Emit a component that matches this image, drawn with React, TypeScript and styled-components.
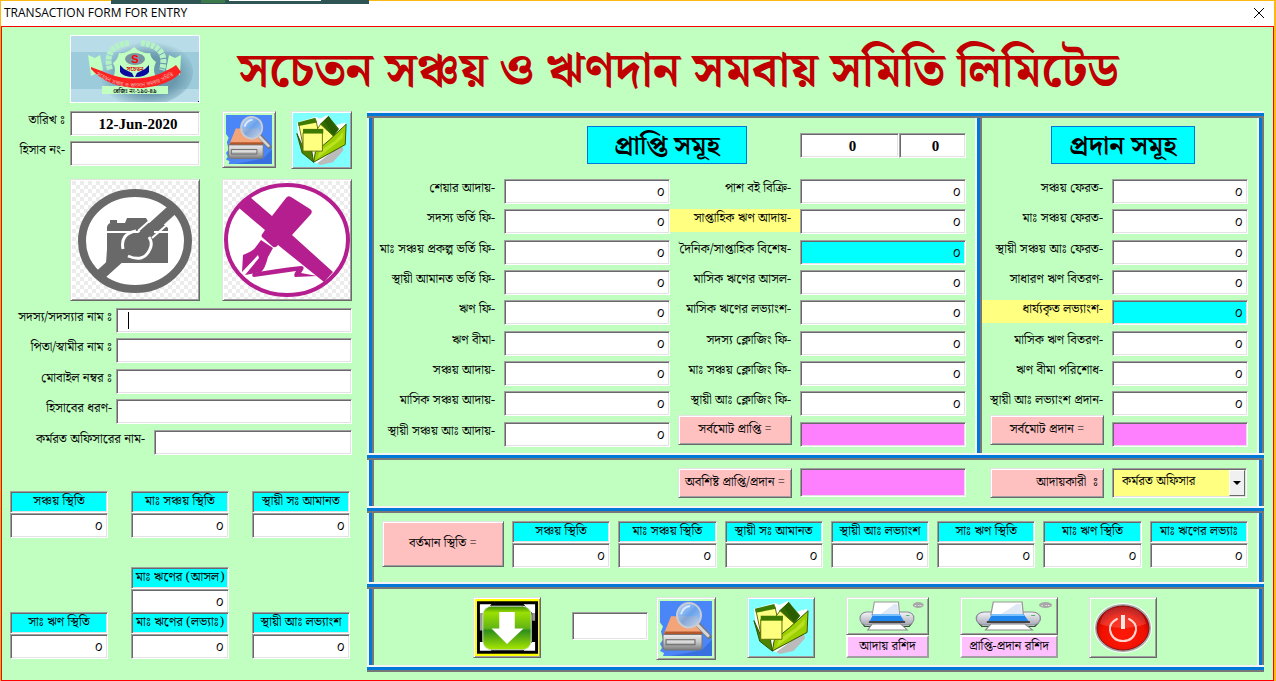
import React, { useId, useState } from "react";
import styled, { createGlobalStyle, css } from "styled-components";

const bengali = `"Noto Serif Bengali", "Lohit Bengali", "Liberation Serif", serif`;

const GlobalStyle = createGlobalStyle`
  * { box-sizing: border-box; }
  body { margin: 0; background: #fdb913; color: #000; font-family: ${bengali}; font-size: 13px; line-height: 20px; }
  input, select, button { font: inherit; color: inherit; margin: 0; }
`;

const sunken = css`
  border: 1px solid;
  border-color: #a0a0a0 #fff #fff #a0a0a0;
  box-shadow: inset 1px 1px #696969, inset -1px -1px #e3e3e3;
`;

const raised = css`
  border: 1px solid;
  border-color: #e3e3e3 #696969 #696969 #e3e3e3;
  box-shadow: inset 1px 1px #fff, inset -1px -1px #a0a0a0;
`;

/* ---------- window ---------- */

const Window = styled.div`
  position: relative;
  display: flex;
  flex-direction: column;
  min-width: 1240px;
  min-height: 100vh;
  padding: 1px 2px 0 1px;
`;

const BackdropStrip = styled.div`
  position: absolute;
  top: 0;
  left: 111px;
  width: 258px;
  height: 4px;
  padding-left: 90px;
  display: flex;
  gap: 4px;
  background: #2f5454;
`;

const BackdropChip = styled.i<{ $wide?: boolean }>`
  width: ${(p) => (p.$wide ? 92 : 24)}px;
  height: ${(p) => (p.$wide ? 1 : 3)}px;
  background: ${(p) => (p.$wide ? "#fff" : "#3c7a4c")};
`;

const TitleBar = styled.header`
  display: flex;
  align-items: center;
  justify-content: space-between;
  height: 25px;
  padding: 0 9px 1px 3px;
  background: #fff;
  font: 12px/20px "Open Sans", "Noto Sans", sans-serif;
`;

const CloseButton = styled.button`
  display: flex;
  padding: 0;
  border: 0;
  background: none;
`;

const Form = styled.main`
  flex: 1;
  padding-bottom: 8px;
  border: 1px solid #f00;
  background: #c0ffc0;
`;

const Masthead = styled.div`
  display: flex;
  height: 84px;
  padding: 8px 0 0 68px;
`;

const LogoFrame = styled.div`
  width: 130px;
  height: 68px;
  border: 1px solid #fff;
  svg { display: block; }
`;

const Heading = styled.h1`
  margin: 0 0 0 38px;
  color: #c00000;
  font-size: 48px;
  font-weight: 700;
  line-height: 74px;
  white-space: nowrap;
`;

const Columns = styled.div`
  display: flex;
`;

/* ---------- fields ---------- */

const Box = styled.input<{ $tone?: string; $align?: string }>`
  ${sunken}
  display: block;
  width: 100%;
  min-width: 0;
  height: 25px;
  padding: 1px 4px 0 5px;
  border-radius: 0;
  outline: 0;
  background: ${(p) => p.$tone ?? "#fff"};
  text-align: ${(p) => p.$align ?? "right"};
  font-size: 14px;
`;

const LatinBox = styled(Box)`
  padding: 2px 3px 0 9px;
  font: 700 15px/20px "Liberation Serif", serif;
  text-align: center;
`;

const Caption = styled.label<{ $tone?: string }>`
  display: block;
  height: 23px;
  padding-right: 9px;
  line-height: 20px;
  text-align: right;
  white-space: nowrap;
  background: ${(p) => p.$tone ?? "transparent"};
`;

const CYAN = "#00ffff";
const YELLOW = "#ffff80";
const MAGENTA = "#ff80ff";

/* ---------- left side ---------- */

const Side = styled.section`
  flex: none;
  width: 365px;
  padding: 0 15px 0 8px;
`;

const Identity = styled.div`
  display: flex;
  height: 68px;
`;

const IdentityFields = styled.div`
  display: grid;
  grid-template-columns: 60px 130px;
  grid-auto-rows: 30px;
  width: 190px;
  margin-right: 22px;
  ${Caption} { padding-right: 5px; }
`;

const IconButton = styled.button<{ $w: number; $h: number; $tone?: string }>`
  ${raised}
  display: flex;
  align-items: center;
  justify-content: center;
  flex: none;
  width: ${(p) => p.$w}px;
  height: ${(p) => p.$h}px;
  padding: 0;
  background: ${(p) => p.$tone ?? "#c0ffc0"};
`;

const IdentityButtons = styled.div`
  display: flex;
  flex: 1;
  justify-content: space-between;
`;

const Photos = styled.div`
  display: flex;
  justify-content: space-between;
  padding-left: 60px;
`;

const Photo = styled.div`
  ${raised}
  width: 130px;
  height: 122px;
  padding: 1px;
  background: #fff;
  svg { display: block; }
`;

const Member = styled.div`
  display: grid;
  grid-template-rows: repeat(5, 1fr);
  height: 152px;
  margin-top: 7px;
`;

const MemberRow = styled.div<{ $label: number }>`
  position: relative;
  display: grid;
  grid-template-columns: ${(p) => p.$label}px 1fr;
  ${Caption} { padding-right: ${(p) => (p.$label > 106 ? 9 : 4)}px; }
`;

const TextCaret = styled.i`
  position: absolute;
  top: 4px;
  left: 118px;
  width: 1px;
  height: 17px;
  background: #000;
`;

const Balances = styled.div`
  display: grid;
  grid-template-columns: repeat(3, 98px);
  grid-template-rows: 76px 45px 48px;
  column-gap: 23px;
  margin-top: 31px;
`;

const BalanceCell = styled.div<{ $col?: number }>`
  grid-column: ${(p) => p.$col ?? "auto"};
  min-width: 0;
`;

const BalanceLabel = styled.label`
  ${sunken}
  display: block;
  height: 22px;
  background: ${CYAN};
  line-height: 20px;
  text-align: center;
  white-space: nowrap;
`;

/* ---------- framed side ---------- */

const Frame = styled.section`
  flex: 1;
  min-width: 0;
  margin-right: 9px;
`;

const Rail = styled.div`
  height: 7px;
  border: solid;
  border-width: 2px 0;
  border-color: #f4f4f4 transparent #777;
  background: #0078d7;
`;

const Post = styled.div`
  flex: none;
  width: 7px;
  border: solid;
  border-width: 0 2px;
  border-color: transparent #777 transparent #f4f4f4;
  background: #0078d7;
`;

const Band = styled.div<{ $h: number }>`
  display: flex;
  min-height: ${(p) => p.$h}px;
`;

const Receipts = styled.div`
  flex: 592 1 0;
  padding-right: 9px;
`;

const Payments = styled.div`
  flex: 266 1 0;
  padding-right: 9px;
`;

const PanelHead = styled.div`
  display: flex;
  align-items: flex-start;
  justify-content: flex-end;
  height: 61px;
  padding-top: 8px;
`;

const PanelTitle = styled.h2<{ $w: number; $gap: number }>`
  width: ${(p) => p.$w}px;
  height: 38px;
  margin: 0 ${(p) => p.$gap}px 0 0;
  border: 1px solid #0078d7;
  background: ${CYAN};
  font-size: 26px;
  font-weight: 700;
  line-height: 40px;
  text-align: center;
  white-space: nowrap;
`;

const Counters = styled.div`
  display: grid;
  grid-template-columns: 99px 67px;
  margin-top: 7px;
`;

const Sheets = styled.div<{ $n: number }>`
  display: grid;
  grid-template-columns: repeat(${(p) => p.$n}, 1fr);
`;

const Sheet = styled.div`
  display: grid;
  grid-template-columns: 130px 1fr;
  grid-template-rows: repeat(9, 1fr);
  height: 273px;
`;

const Plate = styled.label<{ $end?: boolean }>`
  ${raised}
  display: block;
  width: 114px;
  height: 30px;
  margin: -7px 8px 0 auto;
  padding: 0 5px;
  background: #ffc0c0;
  line-height: 28px;
  text-align: ${(p) => (p.$end ? "right" : "center")};
  white-space: nowrap;
`;

const Remainder = styled.div`
  display: grid;
  flex: 1;
  grid-template-columns: minmax(0, 1fr) 166px minmax(0, 146px) 135px;
  align-items: start;
  padding: 8px 10px 0 0;
  ${Plate} { margin-top: 0; }
  ${Box} { height: 29px; }
`;

const SelectShell = styled.div`
  ${sunken}
  position: relative;
  height: 30px;
  padding: 2px;
  background: ${YELLOW};
`;

const Select = styled.select`
  appearance: none;
  display: block;
  width: 100%;
  height: 22px;
  padding: 0 18px 0 7px;
  border: 0;
  outline: 0;
  background: transparent;
  line-height: 18px;
`;

const SelectArrow = styled.span`
  position: absolute;
  top: 1px;
  right: 1px;
  display: flex;
  align-items: center;
  justify-content: center;
  width: 16px;
  height: 26px;
  border: 1px solid;
  border-color: #fff #696969 #696969 #fff;
  background: #f0f0f0;
  pointer-events: none;
`;

const Standing = styled.div`
  display: grid;
  flex: 1;
  grid-template-columns: 122px repeat(7, 1fr);
  column-gap: 8px;
  align-content: start;
  padding: 8px 9px 0 8px;
`;

const StandingPlate = styled.div`
  ${raised}
  height: 46px;
  background: #ffc0c0;
  line-height: 44px;
  text-align: center;
`;

const Actions = styled.div`
  display: flex;
  flex: 1;
  align-items: flex-start;
  gap: 31px;
  padding: 8px 0 0 99px;
`;

const Finder = styled.div`
  display: flex;
  gap: 8px;
  ${Box} { width: 76px; height: 28px; margin-top: 15px; }
`;

const PrintButton = styled.button<{ $w: number }>`
  display: block;
  width: ${(p) => p.$w}px;
  padding: 0;
  border: 0;
  background: none;
`;

const PrintFace = styled.span`
  ${raised}
  display: flex;
  justify-content: center;
  height: 38px;
  padding-top: 2px;
`;

const PrintName = styled.span`
  display: block;
  height: 23px;
  border: 2px solid;
  border-color: #fff #a0a0a0 #a0a0a0 #fff;
  background: #ffc0ff;
  line-height: 20px;
  white-space: nowrap;
`;

/* ---------- drawings ---------- */

const Logo = () => (
  <svg width="128" height="66" viewBox="0 0 128 66" role="img" aria-label="সচেতন">
    <defs>
      <radialGradient id="glow" cx="0.56" cy="0.55" r="0.5">
        <stop offset="0.55" stopColor="#6a99ae" />
        <stop offset="1" stopColor="#6a99ae" stopOpacity="0" />
      </radialGradient>
      <path id="ribbon" d="M25 39Q64 64 106 38" />
    </defs>
    <path fill="#b9dde8" d="M0 0h128v66H0z" />
    <path fill="#9ccbdb" d="M0 16h128v37H0z" />
    <ellipse cx="72" cy="36" rx="50" ry="34" fill="url(#glow)" />
    <g fill="#c0ffc0">
      <path d="M17 19l7 3 5-3 3 15-12 6zM110 19l-6 3-6-3-3 15 14 5z" />
      <path d="M48 17q8 1 15-6 7 7 16 6 1 6 6 9-4 8 0 15-4 3-22 7-17-4-21-7 4-7 0-14 5-4 6-10z" />
      <path d="M31 50h66v8H31z" />
    </g>
    <g fill="none" stroke="#b5f3c4" strokeWidth="6" strokeDasharray="4 1">
      <path d="M58 7Q32 10 39 34" />
      <path d="M70 7Q98 10 91 34" />
    </g>
    <ellipse cx="64" cy="23" rx="10" ry="6" fill="#7795a0" />
    <text x="64" y="27" fill="#f00" fontSize="11" fontWeight="700" fontFamily="Liberation Sans, sans-serif" textAnchor="middle">S</text>
    <text x="64" y="35" fill="#d00" fontSize="6" fontWeight="700" textAnchor="middle">সচেতন</text>
    <path fill="#0a0aa0" d="M49 29l4 4 8 4 2 4q-11 0-14-5zM78 29l-4 4-8 4-2 4q11 0 14-5z" />
    <path fill="#f22" d="M20 31q11 4 18 7 25 9 50 0 12-5 17-9l5 7q-11 13-38 16-34 1-52-19z" />
    <text fill="#e9b8b0" fontSize="6"><textPath href="#ribbon">সচেতন সঞ্চয় ও ঋণদান সমবায় সমিতি</textPath></text>
    <text x="64" y="57" fill="#112" fontSize="6" fontWeight="700" textAnchor="middle">রেজিঃ নং-১৯০-৪৯</text>
    <path fill="#008" d="M127 65h1v1h-1z" />
  </svg>
);

const SearchArt = ({ w, h }: { w: number; h: number }) => (
  <svg width={w} height={h} viewBox="0 0 52 54" preserveAspectRatio="none" aria-hidden="true">
    <defs>
      <linearGradient id="drive" x1="0" y1="0" x2="0" y2="1">
        <stop stopColor="#ececec" /><stop offset="0.5" stopColor="#c4c4c4" /><stop offset="1" stopColor="#7d7d7d" />
      </linearGradient>
      <linearGradient id="lens" x1="0" y1="0" x2="1" y2="1">
        <stop stopColor="#d6ebff" /><stop offset="0.5" stopColor="#6fa6e8" /><stop offset="1" stopColor="#c5e2ff" />
      </linearGradient>
    </defs>
    <path fill="#4a86f7" d="M0 0h52v54H3l1-3-4-2 2-3-2-4 3-4-2-8 2-5-3-4z" />
    <path fill="#2f62d0" d="M42 48l10-10v16H10z" opacity="0.6" />
    <path fill="#f4a479" d="M11 15h26l5 17H4z" />
    <path fill="#b4582c" d="M5 30h37v3H4z" />
    <path fill="url(#drive)" stroke="#777" strokeWidth="1" d="M3 33h39v12q0 3-3 3H6q-3 0-3-3z" />
    <path fill="none" stroke="#666" d="M6 38h29v5H6z" />
    <path fill="#ddd" d="M7 39h27v2H7z" />
    <path stroke="#777" strokeWidth="5" strokeLinecap="round" d="M39 24l10 11" />
    <path stroke="#d6d6d6" strokeWidth="3" strokeLinecap="round" d="M38 24l10 10" />
    <circle cx="29" cy="14" r="12" fill="url(#lens)" fillOpacity="0.85" stroke="#c9ccd2" strokeWidth="2" />
    <path fill="none" stroke="#fff" strokeWidth="2" opacity="0.7" d="M21 13q2-7 9-8" />
  </svg>
);

const FolderArt = ({ w, h }: { w: number; h: number }) => (
  <svg width={w} height={h} viewBox="0 0 58 54" preserveAspectRatio="none" aria-hidden="true">
    <path fill="#fff" d="M1 8l22-6 4 2 9-4 9 11 11-3 1 20-12 18-17 7-8-2-9-12L3 28z" />
    <path fill="#bbb" d="M24 52l28-20 2 6-12 13-14 3z" />
    <path fill="#2f6b00" d="M27 10l10-9 12 14-9 12z" />
    <path fill="#ffff80" stroke="#5c6b00" strokeWidth="1" d="M3 9l20-2 5 22-20 4z" />
    <path fill="#3f7a00" d="M2 8l20-5 2 5L3 12z" />
    <path fill="#ffff80" stroke="#5c6b00" strokeWidth="1" d="M28 10l17 15-15 14-13-14z" />
    <path fill="#2a5c00" d="M32 6l5-5 10 15-5 5z" />
    <path fill="#9ccf00" stroke="#2b4f00" d="M20 51l2-11 16-13 19-17-1 22z" />
    <path fill="#c8ea30" d="M24 47l3-8 17-11 10-10-1 7z" opacity="0.7" />
    <path fill="#4d8300" stroke="#2b4f00" d="M1 20l6 21 13 10-2-12-9-2z" />
    <path fill="#ffff80" stroke="#5c6b00" strokeWidth="1" d="M8 19h22v20H8z" />
    <path fill="#3f7a00" d="M8 15h23v5H8z" />
  </svg>
);

const Checks = ({ id }: { id: string }) => (
  <>
    <defs>
      <pattern id={id} width="8" height="8" patternUnits="userSpaceOnUse">
        <path fill="#fff" d="M0 0h8v8H0z" />
        <path fill="#ececec" d="M0 0h4v4H0zM4 4h4v4H4z" />
      </pattern>
    </defs>
    <path fill={`url(#${id})`} d="M0 0h126v118H0z" />
  </>
);

const NoPhoto = () => (
  <svg width="126" height="118" viewBox="0 0 126 118" role="img" aria-label="No photo">
    <Checks id="checksA" />
    <ellipse cx="63" cy="60" rx="53" ry="48" fill="#fff" stroke="#696969" strokeWidth="8" />
    <path stroke="#696969" strokeWidth="11" d="M26 96L102 27" />
    <g fill="#696969">
      <path d="M38 39h7v3h-7zM53 42l2-5h19l3 5h13l6 5v3H35v-4q1-4 4-4h14z" />
      <path d="M35 52h61v30H34l1-14z" />
    </g>
    <path fill="#fff" d="M35 50h18v2H35zM82 50h14v2H82z" />
    <path fill="none" stroke="#fff" strokeWidth="3" d="M51 68q-3-15 13-18M56 75q16 7 22-7 3-6-1-12" />
    <path fill="none" stroke="#fff" strokeWidth="2" d="M66 50l18-16M80 57l17-15" />
  </svg>
);

const NoSignature = () => (
  <svg width="126" height="118" viewBox="0 0 126 118" role="img" aria-label="No signature">
    <Checks id="checksB" />
    <ellipse cx="63" cy="59" rx="61" ry="55" fill="#fff" stroke="#b41e8e" strokeWidth="4" />
    <g fill="#b41e8e">
      <path d="M26 16l22 19 14-18q2-3 5-1l19 12q3 2 1 5L68 54l41 37-9 10-46-37q-3 4-6 1l-9-8q-3-2 0-5l2-3L15 27z" />
      <path d="M37 59l12 8-5 9q-3 12-7 15l-16 3 14-17-1-3-16 17 1-17q10-4 12-7z" />
      <path d="M29 92q20-4 48-7 4 0 2 4l-2 3 16 3-22 1q-2-2 1-6l-42 6q-3 0-1-4z" />
    </g>
  </svg>
);

const DownloadArt = () => (
  <svg width="61" height="53" viewBox="0 0 63 54" aria-hidden="true">
    <defs>
      <linearGradient id="lime" x1="0" y1="0" x2="0" y2="1">
        <stop stopColor="#3e8e00" /><stop offset="0.15" stopColor="#9be000" /><stop offset="0.5" stopColor="#62b515" />
        <stop offset="0.56" stopColor="#2f8f1c" /><stop offset="1" stopColor="#a9e800" />
      </linearGradient>
    </defs>
    <path fill="#000" d="M0 0h63v54H0z" />
    <path fill="#fff" d="M3 3h12L7 12H3zM60 3H48l9 9h3zM3 51h12L6 42H3zM60 51H48l9-9h3z" />
    <path fill="#999" d="M3 12h3v18H3zM57 12h3v8h-3z" />
    <rect x="6" y="5" width="50" height="45" rx="9" fill="url(#lime)" stroke="#d8e8d0" />
    <path fill="#fff" d="M23 11h16v17h9L31 44 15 28h8z" />
  </svg>
);

const PrinterArt = ({ w }: { w: number }) => (
  <svg width={w} height="32" viewBox="0 0 72 32" preserveAspectRatio="none" aria-hidden="true">
    <defs>
      <linearGradient id="case" x1="0" y1="0" x2="0" y2="1">
        <stop stopColor="#f4f4f8" /><stop offset="1" stopColor="#a9a9b8" />
      </linearGradient>
    </defs>
    <rect x="11" y="12" width="49" height="13" rx="6" fill="url(#case)" stroke="#8a8a98" />
    <path fill="#444" d="M12 23l4 3h6v1h-7zM59 23l-4 3h-6v1h7z" />
    <path fill="#fff" stroke="#999" d="M24 2h22l1 13H22z" />
    <path fill="#dfe9f5" d="M30 14l12-10h3l1 10z" />
    <path fill="#1f86ee" d="M23 14h24l4 7H20z" />
    <path fill="#7cc1ff" d="M23 14h24l1 2H22z" />
    <path fill="#444" d="M19 21h33v2H19z" />
    <path fill="#fff" stroke="#888" d="M22 24h26l6 6H18z" />
    <path fill="#4fb36b" d="M53 15h3v1h-3z" />
    <ellipse cx="64" cy="5" rx="5" ry="3" fill="#a8a8a8" />
    <path fill="#eee" d="M61 5h1v1h-1zM64 5h1v1h-1zM66 5h1v1h-1z" />
  </svg>
);

const PowerArt = () => (
  <svg width="60" height="54" viewBox="0 0 60 54" aria-hidden="true">
    <defs>
      <radialGradient id="red" cx="0.5" cy="0.65" r="0.6">
        <stop stopColor="#ff1a08" /><stop offset="0.7" stopColor="#f01000" /><stop offset="1" stopColor="#b00000" />
      </radialGradient>
    </defs>
    <ellipse cx="30" cy="27" rx="29" ry="25" fill="#fff" />
    <ellipse cx="30" cy="27" rx="28" ry="24" fill="#a6a6a6" />
    <ellipse cx="30" cy="27" rx="26" ry="22" fill="url(#red)" stroke="#8a1010" />
    <path fill="#fff" opacity="0.15" d="M7 23Q10 6 30 6t23 17Q30 31 7 23z" />
    <path fill="none" stroke="#ffd6d0" strokeWidth="2" strokeLinecap="round" d="M24 18q-8 4-7 11 2 11 13 11t13-11q1-7-7-11" />
    <path stroke="#ffe6e2" strokeWidth="4" d="M30 14v14" />
  </svg>
);

/* ---------- pieces ---------- */

type Entry = { label: string; tone?: string; labelTone?: string; total?: boolean };

function EntryField({ label, tone, labelTone, total }: Entry) {
  const id = useId();
  return (
    <>
      {total ? <Plate htmlFor={id}>{label}</Plate> : <Caption htmlFor={id} $tone={labelTone}>{label}</Caption>}
      <Box id={id} $tone={total ? MAGENTA : tone} defaultValue={total ? "" : "০"} />
    </>
  );
}

function Balance({ label, col }: { label: string; col?: number }) {
  const id = useId();
  return (
    <BalanceCell $col={col}>
      <BalanceLabel htmlFor={id}>{label}</BalanceLabel>
      <Box id={id} defaultValue="০" />
    </BalanceCell>
  );
}

function MemberField({ label, width, caret }: { label: string; width: number; caret?: boolean }) {
  const id = useId();
  return (
    <MemberRow $label={width}>
      <Caption htmlFor={id}>{label}</Caption>
      <Box id={id} $align="left" />
      {caret && <TextCaret />}
    </MemberRow>
  );
}

const receiptsA: Entry[] = [
  { label: "শেয়ার আদায়-" },
  { label: "সদস্য ভর্তি ফি-" },
  { label: "মাঃ সঞ্চয় প্রকল্প ভর্তি ফি-" },
  { label: "স্থায়ী আমানত ভর্তি ফি-" },
  { label: "ঋণ ফি-" },
  { label: "ঋণ বীমা-" },
  { label: "সঞ্চয় আদায়-" },
  { label: "মাসিক সঞ্চয় আদায়-" },
  { label: "স্থায়ী সঞ্চয় আঃ আদায়-" },
];

const receiptsB: Entry[] = [
  { label: "পাশ বই বিক্রি-" },
  { label: "সাপ্তাহিক ঋণ আদায়-", labelTone: YELLOW },
  { label: "দৈনিক/সাপ্তাহিক বিশেষ-", tone: CYAN },
  { label: "মাসিক ঋণের আসল-" },
  { label: "মাসিক ঋণের লভ্যাংশ-" },
  { label: "সদস্য ক্লোজিং ফি-" },
  { label: "মাঃ সঞ্চয় ক্লোজিং ফি-" },
  { label: "স্থায়ী আঃ ক্লোজিং ফি-" },
  { label: "সর্বমোট প্রাপ্তি =", total: true },
];

const payments: Entry[] = [
  { label: "সঞ্চয় ফেরত-" },
  { label: "মাঃ সঞ্চয় ফেরত-" },
  { label: "স্থায়ী সঞ্চয় আঃ ফেরত-" },
  { label: "সাধারণ ঋণ বিতরণ-" },
  { label: "ধার্য্যকৃত লভ্যাংশ-", labelTone: YELLOW, tone: CYAN },
  { label: "মাসিক ঋণ বিতরণ-" },
  { label: "ঋণ বীমা পরিশোধ-" },
  { label: "স্থায়ী আঃ লভ্যাংশ প্রদান-" },
  { label: "সর্বমোট প্রদান =", total: true },
];

const standing = [
  "সঞ্চয় স্থিতি",
  "মাঃ সঞ্চয় স্থিতি",
  "স্থায়ী সঃ আমানত",
  "স্থায়ী আঃ লভ্যাংশ",
  "সাঃ ঋণ স্থিতি",
  "মাঃ ঋণ স্থিতি",
  "মাঃ ঋণের লভ্যাঃ",
];

export default function App() {
  const [date, setDate] = useState("12-Jun-2020");
  return (
    <>
      <GlobalStyle />
      <Window>
        <TitleBar>
          <span>TRANSACTION FORM FOR ENTRY</span>
          <CloseButton aria-label="Close">
            <svg width="12" height="12" viewBox="0 0 12 12"><path stroke="#000" d="M1 1l10 10M11 1L1 11" /></svg>
          </CloseButton>
        </TitleBar>
        <BackdropStrip><BackdropChip /><BackdropChip $wide /></BackdropStrip>
        <Form>
          <Masthead>
            <LogoFrame><Logo /></LogoFrame>
            <Heading>সচেতন সঞ্চয় ও ঋণদান সমবায় সমিতি লিমিটেড</Heading>
          </Masthead>
          <Columns>
            <Side>
              <Identity>
                <IdentityFields>
                  <Caption htmlFor="date">তারিখ{"\u00a0"}ঃ</Caption>
                  <LatinBox id="date" value={date} onChange={(e) => setDate(e.target.value)} />
                  <Caption htmlFor="account">হিসাব নং-</Caption>
                  <LatinBox id="account" />
                </IdentityFields>
                <IdentityButtons>
                  <IconButton $w={54} $h={57} aria-label="Search"><SearchArt w={46} h={49} /></IconButton>
                  <IconButton $w={61} $h={58} $tone="#80ffff" aria-label="Open"><FolderArt w={51} h={50} /></IconButton>
                </IdentityButtons>
              </Identity>
              <Photos>
                <Photo><NoPhoto /></Photo>
                <Photo><NoSignature /></Photo>
              </Photos>
              <Member>
                <MemberField label={"সদস্য/সদস্যার নাম\u00a0ঃ"} width={106} caret />
                <MemberField label={"পিতা/স্বামীর নাম\u00a0ঃ"} width={106} />
                <MemberField label={"মোবাইল নম্বর\u00a0ঃ"} width={106} />
                <MemberField label="হিসাবের ধরণ-" width={106} />
                <MemberField label="কর্মরত অফিসারের নাম-" width={144} />
              </Member>
              <Balances>
                <Balance label="সঞ্চয় স্থিতি" />
                <Balance label="মাঃ সঞ্চয় স্থিতি" />
                <Balance label="স্থায়ী সঃ আমানত" />
                <Balance label="মাঃ ঋণের (আসল)" col={2} />
                <Balance label="সাঃ ঋণ স্থিতি" col={1} />
                <Balance label="মাঃ ঋণের (লভ্যাঃ)" />
                <Balance label="স্থায়ী আঃ লভ্যাংশ" />
              </Balances>
            </Side>

            <Frame>
              <Rail />
              <Band $h={335}>
                <Post />
                <Receipts>
                  <PanelHead>
                    <PanelTitle $w={160} $gap={53}>প্রাপ্তি সমূহ</PanelTitle>
                    <Counters>
                      <LatinBox aria-label="Receipt count" defaultValue="0" />
                      <LatinBox aria-label="Receipt number" defaultValue="0" />
                    </Counters>
                  </PanelHead>
                  <Sheets $n={2}>
                    <Sheet>{receiptsA.map((e) => <EntryField key={e.label} {...e} />)}</Sheet>
                    <Sheet>{receiptsB.map((e) => <EntryField key={e.label} {...e} />)}</Sheet>
                  </Sheets>
                </Receipts>
                <Post />
                <Payments>
                  <PanelHead>
                    <PanelTitle $w={144} $gap={53}>প্রদান সমূহ</PanelTitle>
                  </PanelHead>
                  <Sheets $n={1}>
                    <Sheet>{payments.map((e) => <EntryField key={e.label} {...e} />)}</Sheet>
                  </Sheets>
                </Payments>
                <Post />
              </Band>
              <Rail />
              <Band $h={46}>
                <Post />
                <Remainder>
                  <Plate htmlFor="rest">অবশিষ্ট প্রাপ্তি/প্রদান =</Plate>
                  <Box id="rest" $tone={MAGENTA} />
                  <Plate htmlFor="officer" $end>আদায়কারী {"\u00a0"}ঃ</Plate>
                  <SelectShell>
                    <Select id="officer"><option>কর্মরত অফিসার</option></Select>
                    <SelectArrow>
                      <svg width="8" height="4" viewBox="0 0 8 4"><path d="M0 0h8L4 4z" /></svg>
                    </SelectArrow>
                  </SelectShell>
                </Remainder>
                <Post />
              </Band>
              <Rail />
              <Band $h={69}>
                <Post />
                <Standing>
                  <StandingPlate>বর্তমান স্থিতি =</StandingPlate>
                  {standing.map((s) => <Balance key={s} label={s} />)}
                </Standing>
                <Post />
              </Band>
              <Rail />
              <Band $h={76}>
                <Post />
                <Actions>
                  <IconButton $w={68} $h={61} $tone="#ffff00" aria-label="Save"><DownloadArt /></IconButton>
                  <Finder>
                    <Box aria-label="Search number" $align="left" />
                    <IconButton $w={60} $h={63} aria-label="Search"><SearchArt w={52} h={55} /></IconButton>
                  </Finder>
                  <IconButton $w={68} $h={61} $tone="#80ffff" aria-label="Open"><FolderArt w={56} h={53} /></IconButton>
                  <PrintButton $w={83}>
                    <PrintFace><PrinterArt w={79} /></PrintFace>
                    <PrintName>আদায় রশিদ</PrintName>
                  </PrintButton>
                  <PrintButton $w={98}>
                    <PrintFace><PrinterArt w={94} /></PrintFace>
                    <PrintName>প্রাপ্তি-প্রদান রশিদ</PrintName>
                  </PrintButton>
                  <IconButton $w={68} $h={61} aria-label="Exit"><PowerArt /></IconButton>
                </Actions>
                <Post />
              </Band>
              <Rail />
            </Frame>
          </Columns>
        </Form>
      </Window>
    </>
  );
}
